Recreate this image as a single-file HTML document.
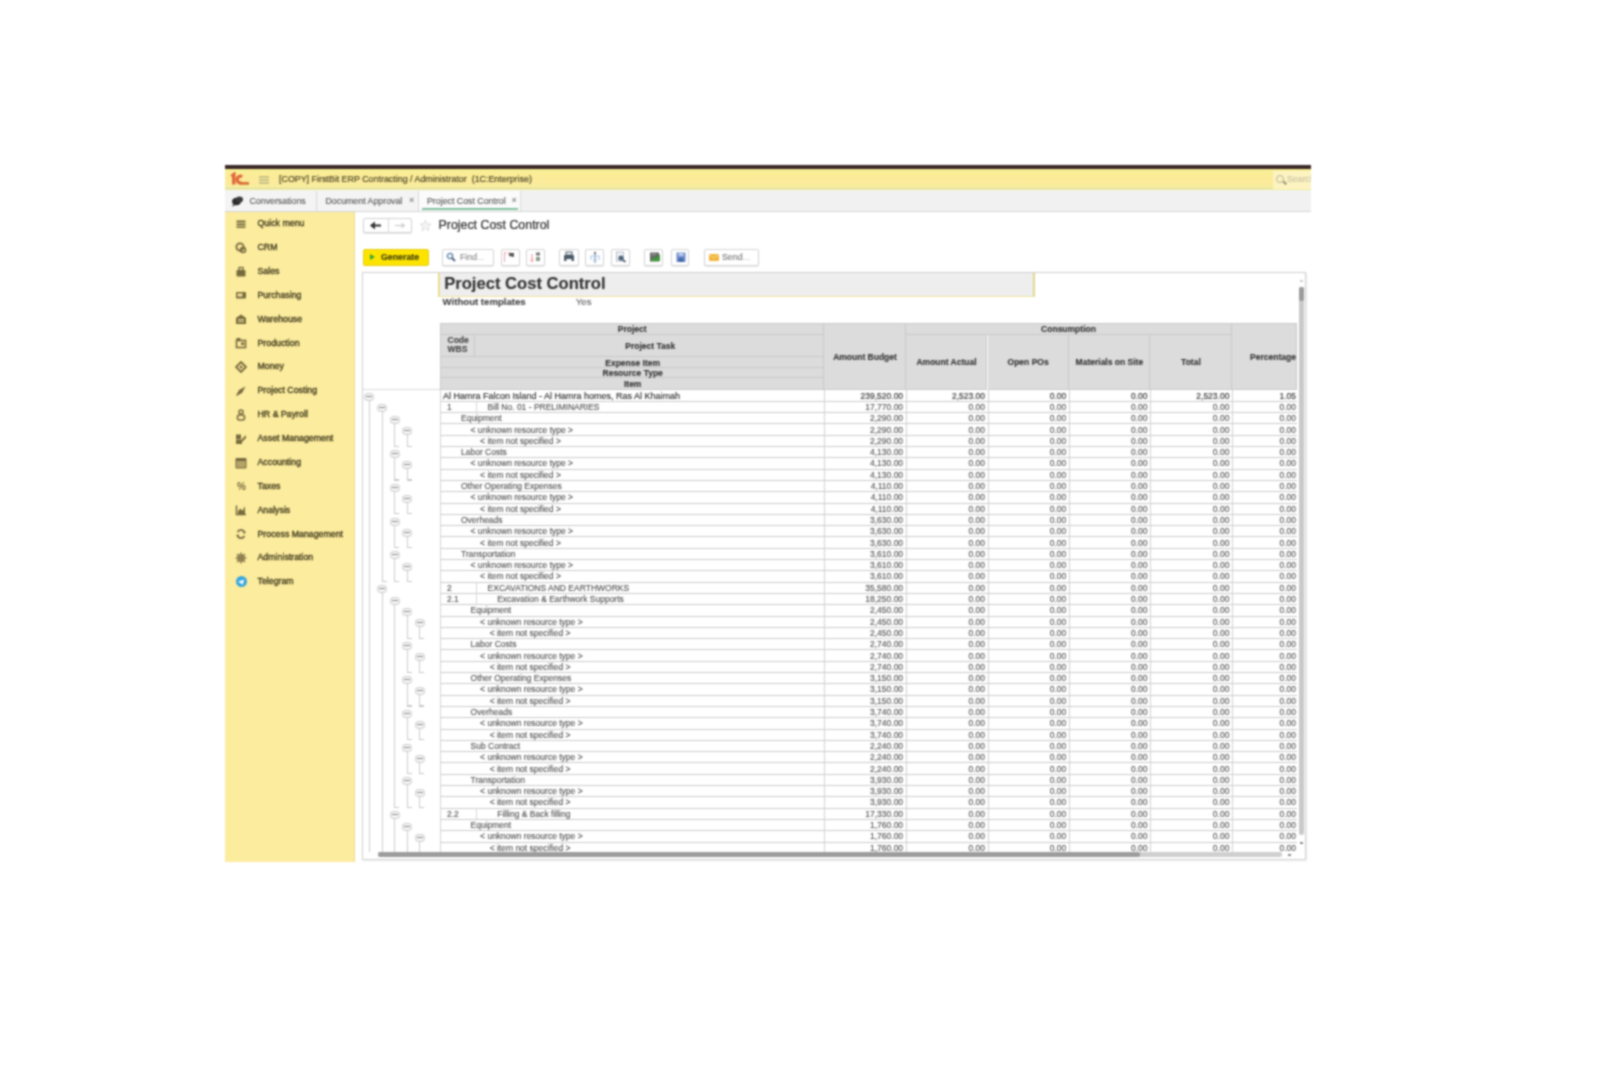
<!DOCTYPE html><html><head><meta charset="utf-8"><style>
*{margin:0;padding:0;box-sizing:border-box}
html,body{width:1600px;height:1068px;background:#fff;overflow:hidden;font-family:"Liberation Sans",sans-serif;}
.a{position:absolute}
.t{position:absolute;white-space:nowrap;line-height:1;-webkit-text-stroke:0.12px currentColor}
</style></head><body><svg width="0" height="0" style="position:absolute"><filter id="bl" x="0" y="0" width="1600" height="1068" filterUnits="userSpaceOnUse" color-interpolation-filters="sRGB"><feConvolveMatrix order="5" kernelMatrix="0.00142 0.00904 0.01675 0.00904 0.00142 0.00904 0.05757 0.10673 0.05757 0.00904 0.01675 0.10673 0.19786 0.10673 0.01675 0.00904 0.05757 0.10673 0.05757 0.00904 0.00142 0.00904 0.01675 0.00904 0.00142" edgeMode="duplicate"/></filter></svg><div id="w" style="position:absolute;left:0;top:0;width:1600px;height:1068px;background:#fff;filter:url(#bl);"><div class="a" style="left:225px;top:165px;width:1086px;height:4px;background:#3a2828"></div>
<div class="a" style="left:225px;top:169px;width:1086px;height:21px;background:linear-gradient(#f7f096 0px,#fbec96 6px,#fbea9c 15px,#f5ef9c 18px,#f4f09c 19px,#dcd8a8 19px,#dcd8a8 20px,#f4f09c 20px)"></div>
<svg class="a" style="left:229px;top:172px" width="22" height="15" viewBox="0 0 22 15"><path d="M2.5 4.5 L4.8 2.6 V12.5" stroke="#e0673a" stroke-width="3.4" fill="none"/><path d="M13.2 4.6 A3.4 3.4 0 1 0 13 10.6" stroke="#e0673a" stroke-width="3.2" fill="none"/><rect x="11" y="10" width="9" height="2.8" fill="#d8743a"/></svg>
<div class="a" style="left:259px;top:175.6px;width:10px;height:2.4px;background:#c9c186"></div>
<div class="a" style="left:259px;top:178.7px;width:10px;height:2.4px;background:#c9c186"></div>
<div class="a" style="left:259px;top:181.8px;width:10px;height:2.4px;background:#c9c186"></div>
<div class="t" style="left:279px;top:175px;font-size:8.9px;color:#4e4828;-webkit-text-stroke:0.2px #4e4828">[COPY] FirstBit ERP Contracting / Administrator&nbsp; (1C:Enterprise)</div>
<div class="a" style="left:1273px;top:171px;width:38px;height:18px;background:#fcf3c0;overflow:hidden"><div class="a" style="left:3px;top:4px;width:8px;height:8px;border:1.3px solid #b9b59a;border-radius:50%"></div><div class="a" style="left:9.5px;top:10.5px;width:4px;height:1.5px;background:#8f8a70;transform:rotate(45deg)"></div><div class="t" style="left:14px;top:4px;font-size:8.8px;color:#c9c4a4">Search</div></div>
<div class="a" style="left:225px;top:190px;width:1086px;height:22px;background:#f1f1f1;border-bottom:1px solid #d6d6d6"></div>
<div class="a" style="left:225px;top:191px;width:92px;height:20px;background:#f4f4f4;border-right:1px solid #dadada"></div>
<div class="a" style="left:318px;top:191px;width:101px;height:20px;background:#f4f4f4;border-right:1px solid #dadada"></div>
<div class="a" style="left:419px;top:191px;width:102px;height:20px;background:#fbfbfb;border-right:1px solid #dadada"></div>
<div class="a" style="left:422px;top:208px;width:96px;height:2px;background:#7fbfa0"></div>
<svg class="a" style="left:231px;top:195px" width="13" height="12" viewBox="0 0 13 12"><ellipse cx="5.5" cy="6.5" rx="4.5" ry="3.8" fill="#2a2a2a"/><ellipse cx="8.5" cy="4.5" rx="3.5" ry="3" fill="#3a3a3a"/><path d="M2 9.5 L1 11.5 L4.5 10" fill="#2a2a2a"/></svg>
<div class="t" style="left:249.5px;top:196.5px;font-size:8.8px;color:#555">Conversations</div>
<div class="t" style="left:325.5px;top:196.5px;font-size:8.8px;color:#555">Document Approval</div>
<div class="t" style="left:409px;top:195.5px;font-size:9px;color:#777">&#215;</div>
<div class="t" style="left:427px;top:196.5px;font-size:8.8px;color:#555">Project Cost Control</div>
<div class="t" style="left:511.5px;top:195.5px;font-size:9px;color:#777">&#215;</div>
<div class="a" style="left:225px;top:212px;width:130px;height:650px;background:#fcec9e;border-right:1px solid #eadb92"></div>
<div class="t" style="left:257.5px;top:219.15px;font-size:8.8px;color:#3a3418;-webkit-text-stroke:0.3px #3a3418">Quick menu</div>
<svg class="a" style="left:235px;top:217.75px" width="12" height="12" viewBox="0 0 12 12"><rect x="1.5" y="2.5" width="9" height="2" fill="#766a3c"/><rect x="1.5" y="5.5" width="9" height="2" fill="#766a3c"/><rect x="1.5" y="8.5" width="9" height="1.5" fill="#766a3c"/></svg>
<div class="t" style="left:257.5px;top:243.03px;font-size:8.8px;color:#3a3418;-webkit-text-stroke:0.3px #3a3418">CRM</div>
<svg class="a" style="left:235px;top:241.63px" width="12" height="12" viewBox="0 0 12 12"><circle cx="5" cy="5" r="3.6" fill="none" stroke="#766a3c" stroke-width="1.8"/><circle cx="8" cy="8" r="2.5" fill="none" stroke="#766a3c" stroke-width="1.6"/></svg>
<div class="t" style="left:257.5px;top:266.91px;font-size:8.8px;color:#3a3418;-webkit-text-stroke:0.3px #3a3418">Sales</div>
<svg class="a" style="left:235px;top:265.51px" width="12" height="12" viewBox="0 0 12 12"><rect x="1.5" y="4" width="9" height="6.5" rx="1" fill="#766a3c"/><rect x="4" y="1.5" width="4" height="3" fill="none" stroke="#766a3c" stroke-width="1.3"/></svg>
<div class="t" style="left:257.5px;top:290.79px;font-size:8.8px;color:#3a3418;-webkit-text-stroke:0.3px #3a3418">Purchasing</div>
<svg class="a" style="left:235px;top:289.39px" width="12" height="12" viewBox="0 0 12 12"><rect x="1" y="3" width="10" height="6.5" rx="1" fill="#766a3c"/><rect x="2.5" y="4.5" width="5" height="3" fill="#f5e39a"/></svg>
<div class="t" style="left:257.5px;top:314.67px;font-size:8.8px;color:#3a3418;-webkit-text-stroke:0.3px #3a3418">Warehouse</div>
<svg class="a" style="left:235px;top:313.27px" width="12" height="12" viewBox="0 0 12 12"><path d="M1 5 L6 1.5 L11 5 V11 H1 Z" fill="#766a3c"/><rect x="3" y="6" width="6" height="1" fill="#f5e39a"/><rect x="3" y="8" width="6" height="1" fill="#f5e39a"/></svg>
<div class="t" style="left:257.5px;top:338.55px;font-size:8.8px;color:#3a3418;-webkit-text-stroke:0.3px #3a3418">Production</div>
<svg class="a" style="left:235px;top:337.15px" width="12" height="12" viewBox="0 0 12 12"><rect x="1.5" y="3.5" width="9" height="7" fill="none" stroke="#766a3c" stroke-width="1.6"/><rect x="1.5" y="1" width="4" height="3" fill="#766a3c"/><rect x="6" y="5.5" width="3" height="2.5" fill="#766a3c"/></svg>
<div class="t" style="left:257.5px;top:362.43px;font-size:8.8px;color:#3a3418;-webkit-text-stroke:0.3px #3a3418">Money</div>
<svg class="a" style="left:235px;top:361.03px" width="12" height="12" viewBox="0 0 12 12"><path d="M6 1 L11 6 L6 11 L1 6 Z" fill="none" stroke="#766a3c" stroke-width="1.8"/><circle cx="6" cy="6" r="1.5" fill="#766a3c"/></svg>
<div class="t" style="left:257.5px;top:386.31px;font-size:8.8px;color:#3a3418;-webkit-text-stroke:0.3px #3a3418">Project Costing</div>
<svg class="a" style="left:235px;top:384.91px" width="12" height="12" viewBox="0 0 12 12"><path d="M10.5 1.5 L4 5 L2 9 L3 10 L7 8 Z" fill="#766a3c"/><path d="M1.5 10.5 L4 8" stroke="#766a3c" stroke-width="1.5"/></svg>
<div class="t" style="left:257.5px;top:410.19px;font-size:8.8px;color:#3a3418;-webkit-text-stroke:0.3px #3a3418">HR &amp; Payroll</div>
<svg class="a" style="left:235px;top:408.79px" width="12" height="12" viewBox="0 0 12 12"><circle cx="6" cy="3" r="2" fill="none" stroke="#766a3c" stroke-width="1.5"/><rect x="2.5" y="6" width="7" height="5" rx="2" fill="none" stroke="#766a3c" stroke-width="1.6"/></svg>
<div class="t" style="left:257.5px;top:434.07px;font-size:8.8px;color:#3a3418;-webkit-text-stroke:0.3px #3a3418">Asset Management</div>
<svg class="a" style="left:235px;top:432.67px" width="12" height="12" viewBox="0 0 12 12"><rect x="1" y="1.5" width="5" height="5" fill="#766a3c"/><path d="M1 11 V7 H6 L11 2 V5 L7 9 V11 Z" fill="#766a3c"/></svg>
<div class="t" style="left:257.5px;top:457.95px;font-size:8.8px;color:#3a3418;-webkit-text-stroke:0.3px #3a3418">Accounting</div>
<svg class="a" style="left:235px;top:456.55px" width="12" height="12" viewBox="0 0 12 12"><rect x="1" y="1.5" width="10" height="9.5" fill="#766a3c" opacity=".55"/><rect x="1" y="1.5" width="10" height="2.5" fill="#766a3c"/><path d="M1 1.5 H11 V11 H1 Z" fill="none" stroke="#766a3c" stroke-width="1"/></svg>
<div class="t" style="left:257.5px;top:481.83px;font-size:8.8px;color:#3a3418;-webkit-text-stroke:0.3px #3a3418">Taxes</div>
<svg class="a" style="left:235px;top:480.43px" width="12" height="12" viewBox="0 0 12 12"><text x="2" y="10" font-size="10" font-weight="bold" font-family="Liberation Sans" fill="#766a3c">%</text></svg>
<div class="t" style="left:257.5px;top:505.71px;font-size:8.8px;color:#3a3418;-webkit-text-stroke:0.3px #3a3418">Analysis</div>
<svg class="a" style="left:235px;top:504.31px" width="12" height="12" viewBox="0 0 12 12"><path d="M1.5 1.5 V10.5 H11" stroke="#766a3c" stroke-width="1.5" fill="none"/><path d="M3 10 L3 7 L5.5 4.5 L7.5 7 L10 2 V10 Z" fill="#766a3c"/></svg>
<div class="t" style="left:257.5px;top:529.59px;font-size:8.8px;color:#3a3418;-webkit-text-stroke:0.3px #3a3418">Process Management</div>
<svg class="a" style="left:235px;top:528.19px" width="12" height="12" viewBox="0 0 12 12"><path d="M2.5 4 A4 4 0 0 1 9.5 4" fill="none" stroke="#766a3c" stroke-width="1.7"/><path d="M9.5 8 A4 4 0 0 1 2.5 8" fill="none" stroke="#766a3c" stroke-width="1.7"/><path d="M8 2.5 L11 4.5 L8.5 6 Z M4 9.5 L1 7.5 L3.5 6 Z" fill="#766a3c"/></svg>
<div class="t" style="left:257.5px;top:553.47px;font-size:8.8px;color:#3a3418;-webkit-text-stroke:0.3px #3a3418">Administration</div>
<svg class="a" style="left:235px;top:552.07px" width="12" height="12" viewBox="0 0 12 12"><g opacity=".8"><circle cx="6" cy="6" r="4" fill="#766a3c"/><circle cx="6" cy="6" r="1.6" fill="#f5e39a"/><path d="M6 0.5 V11.5 M0.5 6 H11.5 M2 2 L10 10 M10 2 L2 10" stroke="#766a3c" stroke-width="1.6"/></g></svg>
<div class="t" style="left:257.5px;top:577.35px;font-size:8.8px;color:#3a3418;-webkit-text-stroke:0.3px #3a3418">Telegram</div>
<div class="a" style="left:235.5px;top:576.45px;width:11px;height:11px;border-radius:50%;background:#35a6df"></div>
<svg class="a" style="left:237px;top:577.95px" width="8" height="8" viewBox="0 0 8 8"><path d="M1 3.8 L7 1.5 L5.8 6.8 L3.8 5.2 Z" fill="#fff"/></svg>
<div class="a" style="left:355px;top:212px;width:956px;height:650px;background:#fff"></div>
<div class="a" style="left:363px;top:218px;width:49px;height:15px;border:1px solid #d2d2d2;border-radius:2px;background:#fff;box-shadow:0 1px 1px #e6e6e6"></div>
<div class="a" style="left:388px;top:219px;width:1px;height:13px;background:#d8d8d8"></div>
<svg class="a" style="left:369px;top:220px" width="14" height="11" viewBox="0 0 14 11"><path d="M2 5.5 H12" stroke="#333" stroke-width="2"/><path d="M1 5.5 L6 1.5 V9.5 Z" fill="#333"/></svg>
<svg class="a" style="left:393px;top:220px" width="14" height="11" viewBox="0 0 14 11"><path d="M2 5.5 H11" stroke="#d0d0d0" stroke-width="1.3"/><path d="M12.5 5.5 L8.5 2.5 V8.5 Z" fill="#d0d0d0"/></svg>
<svg class="a" style="left:419px;top:219px" width="13" height="13" viewBox="0 0 13 13"><path d="M6.5 1 L8.1 4.8 L12 5 L9 7.6 L10 11.8 L6.5 9.5 L3 11.8 L4 7.6 L1 5 L4.9 4.8 Z" fill="#f4f4f4" stroke="#e0e0e0" stroke-width="1"/></svg>
<div class="t" style="left:438.5px;top:219px;font-size:12.4px;color:#2a2a2a;-webkit-text-stroke:0.2px #2a2a2a">Project Cost Control</div>
<div class="a" style="left:362.5px;top:248.5px;width:66px;height:17px;background:#fde400;border:1px solid #e6cc10;border-radius:2px"></div>
<div class="a" style="left:370px;top:253.5px;width:0;height:0;border-left:5px solid #3aa535;border-top:3.5px solid transparent;border-bottom:3.5px solid transparent"></div>
<div class="t" style="left:381px;top:252.5px;font-size:8.8px;font-weight:bold;color:#3c3a10">Generate</div>
<div class="a" style="left:441.9px;top:248.5px;width:51.85px;height:17px;border:1px solid #d4d4d4;border-radius:2px;background:#fff;box-shadow:0 1px 1px #e8e8e8"></div>
<div class="a" style="left:500.6px;top:248.5px;width:19.40px;height:17px;border:1px solid #d4d4d4;border-radius:2px;background:#fff;box-shadow:0 1px 1px #e8e8e8"></div>
<div class="a" style="left:526.25px;top:248.5px;width:18.75px;height:17px;border:1px solid #d4d4d4;border-radius:2px;background:#fff;box-shadow:0 1px 1px #e8e8e8"></div>
<div class="a" style="left:559.4px;top:248.5px;width:19.35px;height:17px;border:1px solid #d4d4d4;border-radius:2px;background:#fff;box-shadow:0 1px 1px #e8e8e8"></div>
<div class="a" style="left:585px;top:248.5px;width:19.40px;height:17px;border:1px solid #d4d4d4;border-radius:2px;background:#fff;box-shadow:0 1px 1px #e8e8e8"></div>
<div class="a" style="left:611.25px;top:248.5px;width:18.75px;height:17px;border:1px solid #d4d4d4;border-radius:2px;background:#fff;box-shadow:0 1px 1px #e8e8e8"></div>
<div class="a" style="left:644.4px;top:248.5px;width:18.70px;height:17px;border:1px solid #d4d4d4;border-radius:2px;background:#fff;box-shadow:0 1px 1px #e8e8e8"></div>
<div class="a" style="left:670.6px;top:248.5px;width:18.80px;height:17px;border:1px solid #d4d4d4;border-radius:2px;background:#fff;box-shadow:0 1px 1px #e8e8e8"></div>
<div class="a" style="left:703.75px;top:248.5px;width:55.00px;height:17px;border:1px solid #d4d4d4;border-radius:2px;background:#fff;box-shadow:0 1px 1px #e8e8e8"></div>
<svg class="a" style="left:446px;top:251.5px" width="10" height="10" viewBox="0 0 10 10"><circle cx="4" cy="4" r="2.6" fill="none" stroke="#5d7fa6" stroke-width="1.4"/><path d="M6 6 L9 9" stroke="#4a5f7a" stroke-width="1.8"/></svg>
<div class="t" style="left:460px;top:252.5px;font-size:8.8px;color:#888">Find<span style="color:#bbb">...</span></div>
<svg class="a" style="left:503px;top:251px" width="14" height="12" viewBox="0 0 14 12"><path d="M1.5 1 V11" stroke="#f0a0b0" stroke-width="1"/><path d="M2 2 H9" stroke="#f3c0c8" stroke-width="1"/><path d="M6 2 L11 2 L11 6 L6 5 Z" fill="#555"/></svg>
<svg class="a" style="left:529px;top:251px" width="14" height="12" viewBox="0 0 14 12"><path d="M3 3 V11" stroke="#f0a0a8" stroke-width="1.2"/><path d="M1.5 8.5 L3 11 L4.5 8.5" fill="none" stroke="#f0a0a8" stroke-width="1"/><rect x="7" y="1.5" width="4" height="3" fill="#777"/><rect x="7" y="6" width="4" height="4" fill="#8a9a8a"/></svg>
<svg class="a" style="left:563px;top:251px" width="12" height="12" viewBox="0 0 12 12"><rect x="3" y="1" width="6" height="3" fill="none" stroke="#4b5a69" stroke-width="1"/><path d="M1 5 Q1 4 2 4 H10 Q11 4 11 5 V10 H1 Z" fill="#4b5a69"/><rect x="3.5" y="8" width="5" height="3" fill="#fff"/></svg>
<svg class="a" style="left:589px;top:250.5px" width="12" height="13" viewBox="0 0 12 13"><path d="M6 1 V12" stroke="#7a9cc0" stroke-width="1.2"/><path d="M1.5 5 H10.5 M2 5 V9 M10 5 V9 M4 9 H8" stroke="#a8c4e0" stroke-width="1"/><circle cx="6" cy="2" r="1" fill="#555"/></svg>
<svg class="a" style="left:615px;top:251px" width="12" height="12" viewBox="0 0 12 12"><rect x="1.5" y="1" width="7" height="9" fill="#f3f3f8" stroke="#a9b0c0" stroke-width="0.8"/><circle cx="6" cy="7" r="2.6" fill="#4d6278"/><path d="M8 9 L10.5 11" stroke="#2c3c4c" stroke-width="1.6"/></svg>
<svg class="a" style="left:648.5px;top:251px" width="12" height="12" viewBox="0 0 12 12"><rect x="1" y="1.5" width="9" height="9" fill="#666"/><path d="M2 9 L5 6 L7 7.5 L11 3 V10 H2 Z" fill="#3d9a3a"/><rect x="2" y="2.5" width="5" height="2" fill="#888"/></svg>
<svg class="a" style="left:674.5px;top:251px" width="12" height="12" viewBox="0 0 12 12"><rect x="1.5" y="1.5" width="9" height="9.5" fill="#6f8fcc"/><rect x="3.5" y="1.5" width="5" height="3.5" fill="#b8c8e8"/><rect x="3.5" y="7" width="5" height="4" fill="#4466aa"/></svg>
<svg class="a" style="left:707.5px;top:251.5px" width="12" height="11" viewBox="0 0 12 11"><rect x="1" y="2" width="10" height="7" rx="1" fill="#f2b53a"/><path d="M1 2.5 L6 6 L11 2.5" fill="none" stroke="#f8dc90" stroke-width="1"/></svg>
<div class="t" style="left:722px;top:252.5px;font-size:8.8px;color:#777">Send<span style="color:#bbb">...</span></div>
<div class="a" style="left:362px;top:272px;width:943.5px;height:588px;border:1px solid #d0d0d0;background:#fff;overflow:hidden;box-shadow:1px 1px 2px rgba(0,0,0,.08)" id="rb">
<div class="a" style="left:75.30px;top:-0.40px;width:597.20px;height:23.90px;background:#eeeeee;border-bottom:1.5px solid #f0e3a0;border-right:2px solid #e0d88e;border-left:2px solid #e8dc90"></div>
<div class="t" style="left:81.20px;top:2.50px;font-size:16.6px;font-weight:bold;color:#333">Project Cost Control</div>
<div class="t" style="left:79.60px;top:24.20px;font-size:9.6px;font-weight:bold;color:#444">Without templates</div>
<div class="t" style="left:212.80px;top:24.20px;font-size:9.6px;color:#666">Yes</div>
<div class="a" style="left:76.75px;top:50.40px;width:857.25px;height:1px;background:#c9c9c9;z-index:2"></div>
<div class="a" style="left:76.75px;top:50.40px;width:1px;height:66.40px;background:#c9c9c9;z-index:2"></div>
<div class="a" style="left:76.75px;top:50.40px;width:384.65px;height:11.60px;background:#dcdcdc;border-right:1px solid #c9c9c9;border-bottom:1px solid #c9c9c9;"></div>
<div class="t" style="left:169.20px;width:200px;text-align:center;top:52.40px;font-size:8.5px;font-weight:bold;color:#333">Project</div>
<div class="a" style="left:76.75px;top:62.00px;width:35.65px;height:21.90px;background:#dcdcdc;border-right:1px solid #c9c9c9;border-bottom:1px solid #c9c9c9;"></div>
<div class="t" style="left:84.50px;top:63.30px;font-size:8.5px;line-height:9px;color:#444;font-weight:bold">Code<br>WBS</div>
<div class="a" style="left:112.40px;top:62.00px;width:349.00px;height:21.90px;background:#dcdcdc;border-right:1px solid #c9c9c9;border-bottom:1px solid #c9c9c9;"></div>
<div class="t" style="left:187.20px;width:200px;text-align:center;top:69.15px;font-size:8.5px;font-weight:bold;color:#333">Project Task</div>
<div class="a" style="left:76.75px;top:83.90px;width:384.65px;height:11.00px;background:#dcdcdc;border-right:1px solid #c9c9c9;border-bottom:1px solid #c9c9c9;"></div>
<div class="t" style="left:169.70px;width:200px;text-align:center;top:85.60px;font-size:8.5px;font-weight:bold;color:#333">Expense Item</div>
<div class="a" style="left:76.75px;top:94.90px;width:384.65px;height:10.50px;background:#dcdcdc;border-right:1px solid #c9c9c9;border-bottom:1px solid #c9c9c9;"></div>
<div class="t" style="left:169.70px;width:200px;text-align:center;top:96.35px;font-size:8.5px;font-weight:bold;color:#333">Resource Type</div>
<div class="a" style="left:76.75px;top:105.40px;width:384.65px;height:11.40px;background:#dcdcdc;border-right:1px solid #c9c9c9;border-bottom:1px solid #c9c9c9;"></div>
<div class="t" style="left:169.70px;width:200px;text-align:center;top:107.30px;font-size:8.5px;font-weight:bold;color:#333">Item</div>
<div class="a" style="left:461.40px;top:50.40px;width:81.20px;height:66.40px;background:#dcdcdc;border-right:1px solid #c9c9c9;border-bottom:1px solid #c9c9c9;"></div>
<div class="t" style="left:402.00px;width:200px;text-align:center;top:79.70px;font-size:8.5px;font-weight:bold;color:#333">Amount Budget</div>
<div class="a" style="left:542.60px;top:50.40px;width:326.30px;height:11.60px;background:#dcdcdc;border-right:1px solid #c9c9c9;border-bottom:1px solid #c9c9c9;"></div>
<div class="t" style="left:605.50px;width:200px;text-align:center;top:51.80px;font-size:8.5px;font-weight:bold;color:#333">Consumption</div>
<div class="a" style="left:542.60px;top:62.00px;width:81.90px;height:54.80px;background:#dcdcdc;border-right:1px solid #c9c9c9;border-bottom:1px solid #c9c9c9;"></div>
<div class="t" style="left:483.55px;width:200px;text-align:center;top:85.00px;font-size:8.5px;font-weight:bold;color:#333">Amount Actual</div>
<div class="a" style="left:624.50px;top:62.00px;width:81.25px;height:54.80px;background:#dcdcdc;border-right:1px solid #c9c9c9;border-bottom:1px solid #c9c9c9;"></div>
<div class="t" style="left:565.12px;width:200px;text-align:center;top:85.00px;font-size:8.5px;font-weight:bold;color:#333">Open POs</div>
<div class="a" style="left:705.75px;top:62.00px;width:81.25px;height:54.80px;background:#dcdcdc;border-right:1px solid #c9c9c9;border-bottom:1px solid #c9c9c9;"></div>
<div class="t" style="left:646.38px;width:200px;text-align:center;top:85.00px;font-size:8.5px;font-weight:bold;color:#333">Materials on Site</div>
<div class="a" style="left:787.00px;top:62.00px;width:81.90px;height:54.80px;background:#dcdcdc;border-right:1px solid #c9c9c9;border-bottom:1px solid #c9c9c9;"></div>
<div class="t" style="left:727.95px;width:200px;text-align:center;top:85.00px;font-size:8.5px;font-weight:bold;color:#333">Total</div>
<div class="a" style="left:868.90px;top:50.40px;width:65.10px;height:66.40px;background:#dcdcdc;border-right:1px solid #c9c9c9;border-bottom:1px solid #c9c9c9;"></div>
<div class="t" style="left:810.00px;width:200px;text-align:center;top:79.70px;font-size:8.5px;font-weight:bold;color:#333">Percentage</div>
<div class="a" style="left:0px;top:116.30px;width:76.75px;height:1px;background:#dadada"></div>
<div class="a" style="left:0;top:0;width:934.00px;height:579.00px;overflow:hidden">
<div class="a" style="left:76.75px;top:127.80px;width:857.25px;height:1px;background:#cbcbcb"></div>
<div class="t" style="left:79.90px;top:118.60px;font-size:9px;color:#262626">Al Hamra Falcon Island - Al Hamra homes, Ras Al Khaimah</div>
<div class="t" style="left:460.10px;width:80px;text-align:right;top:118.60px;font-size:8.5px;font-weight:normal;color:#2a2a2a">239,520.00</div>
<div class="t" style="left:542.00px;width:80px;text-align:right;top:118.60px;font-size:8.5px;font-weight:normal;color:#2a2a2a">2,523.00</div>
<div class="t" style="left:623.25px;width:80px;text-align:right;top:118.60px;font-size:8.5px;font-weight:normal;color:#2a2a2a">0.00</div>
<div class="t" style="left:704.50px;width:80px;text-align:right;top:118.60px;font-size:8.5px;font-weight:normal;color:#2a2a2a">0.00</div>
<div class="t" style="left:786.40px;width:80px;text-align:right;top:118.60px;font-size:8.5px;font-weight:normal;color:#2a2a2a">2,523.00</div>
<div class="t" style="left:853.00px;width:80px;text-align:right;top:118.60px;font-size:8.5px;font-weight:normal;color:#2a2a2a">1.05</div>
<div class="a" style="left:76.75px;top:139.10px;width:857.25px;height:1px;background:#cbcbcb"></div>
<div class="t" style="left:84.00px;top:129.90px;font-size:8.5px;color:#505050">1</div>
<div class="a" style="left:112.50px;top:128.30px;width:1px;height:11.30px;background:#d8d8d8"></div>
<div class="t" style="left:124.60px;top:129.90px;font-size:8.5px;color:#505050">Bill No. 01 - PRELIMINARIES</div>
<div class="t" style="left:460.10px;width:80px;text-align:right;top:129.90px;font-size:8.5px;font-weight:normal;color:#505050">17,770.00</div>
<div class="t" style="left:542.00px;width:80px;text-align:right;top:129.90px;font-size:8.5px;font-weight:normal;color:#505050">0.00</div>
<div class="t" style="left:623.25px;width:80px;text-align:right;top:129.90px;font-size:8.5px;font-weight:normal;color:#505050">0.00</div>
<div class="t" style="left:704.50px;width:80px;text-align:right;top:129.90px;font-size:8.5px;font-weight:normal;color:#505050">0.00</div>
<div class="t" style="left:786.40px;width:80px;text-align:right;top:129.90px;font-size:8.5px;font-weight:normal;color:#505050">0.00</div>
<div class="t" style="left:853.00px;width:80px;text-align:right;top:129.90px;font-size:8.5px;font-weight:normal;color:#505050">0.00</div>
<div class="a" style="left:76.75px;top:150.40px;width:857.25px;height:1px;background:#cbcbcb"></div>
<div class="t" style="left:98.00px;top:141.20px;font-size:8.5px;color:#505050">Equipment</div>
<div class="t" style="left:460.10px;width:80px;text-align:right;top:141.20px;font-size:8.5px;font-weight:normal;color:#505050">2,290.00</div>
<div class="t" style="left:542.00px;width:80px;text-align:right;top:141.20px;font-size:8.5px;font-weight:normal;color:#505050">0.00</div>
<div class="t" style="left:623.25px;width:80px;text-align:right;top:141.20px;font-size:8.5px;font-weight:normal;color:#505050">0.00</div>
<div class="t" style="left:704.50px;width:80px;text-align:right;top:141.20px;font-size:8.5px;font-weight:normal;color:#505050">0.00</div>
<div class="t" style="left:786.40px;width:80px;text-align:right;top:141.20px;font-size:8.5px;font-weight:normal;color:#505050">0.00</div>
<div class="t" style="left:853.00px;width:80px;text-align:right;top:141.20px;font-size:8.5px;font-weight:normal;color:#505050">0.00</div>
<div class="a" style="left:76.75px;top:161.70px;width:857.25px;height:1px;background:#cbcbcb"></div>
<div class="t" style="left:107.55px;top:152.50px;font-size:8.5px;color:#505050">&lt; unknown resource type &gt;</div>
<div class="t" style="left:460.10px;width:80px;text-align:right;top:152.50px;font-size:8.5px;font-weight:normal;color:#505050">2,290.00</div>
<div class="t" style="left:542.00px;width:80px;text-align:right;top:152.50px;font-size:8.5px;font-weight:normal;color:#505050">0.00</div>
<div class="t" style="left:623.25px;width:80px;text-align:right;top:152.50px;font-size:8.5px;font-weight:normal;color:#505050">0.00</div>
<div class="t" style="left:704.50px;width:80px;text-align:right;top:152.50px;font-size:8.5px;font-weight:normal;color:#505050">0.00</div>
<div class="t" style="left:786.40px;width:80px;text-align:right;top:152.50px;font-size:8.5px;font-weight:normal;color:#505050">0.00</div>
<div class="t" style="left:853.00px;width:80px;text-align:right;top:152.50px;font-size:8.5px;font-weight:normal;color:#505050">0.00</div>
<div class="a" style="left:76.75px;top:173.00px;width:857.25px;height:1px;background:#cbcbcb"></div>
<div class="t" style="left:117.10px;top:163.80px;font-size:8.5px;color:#505050">&lt; item not specified &gt;</div>
<div class="t" style="left:460.10px;width:80px;text-align:right;top:163.80px;font-size:8.5px;font-weight:normal;color:#505050">2,290.00</div>
<div class="t" style="left:542.00px;width:80px;text-align:right;top:163.80px;font-size:8.5px;font-weight:normal;color:#505050">0.00</div>
<div class="t" style="left:623.25px;width:80px;text-align:right;top:163.80px;font-size:8.5px;font-weight:normal;color:#505050">0.00</div>
<div class="t" style="left:704.50px;width:80px;text-align:right;top:163.80px;font-size:8.5px;font-weight:normal;color:#505050">0.00</div>
<div class="t" style="left:786.40px;width:80px;text-align:right;top:163.80px;font-size:8.5px;font-weight:normal;color:#505050">0.00</div>
<div class="t" style="left:853.00px;width:80px;text-align:right;top:163.80px;font-size:8.5px;font-weight:normal;color:#505050">0.00</div>
<div class="a" style="left:76.75px;top:184.30px;width:857.25px;height:1px;background:#cbcbcb"></div>
<div class="t" style="left:98.00px;top:175.10px;font-size:8.5px;color:#505050">Labor Costs</div>
<div class="t" style="left:460.10px;width:80px;text-align:right;top:175.10px;font-size:8.5px;font-weight:normal;color:#505050">4,130.00</div>
<div class="t" style="left:542.00px;width:80px;text-align:right;top:175.10px;font-size:8.5px;font-weight:normal;color:#505050">0.00</div>
<div class="t" style="left:623.25px;width:80px;text-align:right;top:175.10px;font-size:8.5px;font-weight:normal;color:#505050">0.00</div>
<div class="t" style="left:704.50px;width:80px;text-align:right;top:175.10px;font-size:8.5px;font-weight:normal;color:#505050">0.00</div>
<div class="t" style="left:786.40px;width:80px;text-align:right;top:175.10px;font-size:8.5px;font-weight:normal;color:#505050">0.00</div>
<div class="t" style="left:853.00px;width:80px;text-align:right;top:175.10px;font-size:8.5px;font-weight:normal;color:#505050">0.00</div>
<div class="a" style="left:76.75px;top:195.60px;width:857.25px;height:1px;background:#cbcbcb"></div>
<div class="t" style="left:107.55px;top:186.40px;font-size:8.5px;color:#505050">&lt; unknown resource type &gt;</div>
<div class="t" style="left:460.10px;width:80px;text-align:right;top:186.40px;font-size:8.5px;font-weight:normal;color:#505050">4,130.00</div>
<div class="t" style="left:542.00px;width:80px;text-align:right;top:186.40px;font-size:8.5px;font-weight:normal;color:#505050">0.00</div>
<div class="t" style="left:623.25px;width:80px;text-align:right;top:186.40px;font-size:8.5px;font-weight:normal;color:#505050">0.00</div>
<div class="t" style="left:704.50px;width:80px;text-align:right;top:186.40px;font-size:8.5px;font-weight:normal;color:#505050">0.00</div>
<div class="t" style="left:786.40px;width:80px;text-align:right;top:186.40px;font-size:8.5px;font-weight:normal;color:#505050">0.00</div>
<div class="t" style="left:853.00px;width:80px;text-align:right;top:186.40px;font-size:8.5px;font-weight:normal;color:#505050">0.00</div>
<div class="a" style="left:76.75px;top:206.90px;width:857.25px;height:1px;background:#cbcbcb"></div>
<div class="t" style="left:117.10px;top:197.70px;font-size:8.5px;color:#505050">&lt; item not specified &gt;</div>
<div class="t" style="left:460.10px;width:80px;text-align:right;top:197.70px;font-size:8.5px;font-weight:normal;color:#505050">4,130.00</div>
<div class="t" style="left:542.00px;width:80px;text-align:right;top:197.70px;font-size:8.5px;font-weight:normal;color:#505050">0.00</div>
<div class="t" style="left:623.25px;width:80px;text-align:right;top:197.70px;font-size:8.5px;font-weight:normal;color:#505050">0.00</div>
<div class="t" style="left:704.50px;width:80px;text-align:right;top:197.70px;font-size:8.5px;font-weight:normal;color:#505050">0.00</div>
<div class="t" style="left:786.40px;width:80px;text-align:right;top:197.70px;font-size:8.5px;font-weight:normal;color:#505050">0.00</div>
<div class="t" style="left:853.00px;width:80px;text-align:right;top:197.70px;font-size:8.5px;font-weight:normal;color:#505050">0.00</div>
<div class="a" style="left:76.75px;top:218.20px;width:857.25px;height:1px;background:#cbcbcb"></div>
<div class="t" style="left:98.00px;top:209.00px;font-size:8.5px;color:#505050">Other Operating Expenses</div>
<div class="t" style="left:460.10px;width:80px;text-align:right;top:209.00px;font-size:8.5px;font-weight:normal;color:#505050">4,110.00</div>
<div class="t" style="left:542.00px;width:80px;text-align:right;top:209.00px;font-size:8.5px;font-weight:normal;color:#505050">0.00</div>
<div class="t" style="left:623.25px;width:80px;text-align:right;top:209.00px;font-size:8.5px;font-weight:normal;color:#505050">0.00</div>
<div class="t" style="left:704.50px;width:80px;text-align:right;top:209.00px;font-size:8.5px;font-weight:normal;color:#505050">0.00</div>
<div class="t" style="left:786.40px;width:80px;text-align:right;top:209.00px;font-size:8.5px;font-weight:normal;color:#505050">0.00</div>
<div class="t" style="left:853.00px;width:80px;text-align:right;top:209.00px;font-size:8.5px;font-weight:normal;color:#505050">0.00</div>
<div class="a" style="left:76.75px;top:229.50px;width:857.25px;height:1px;background:#cbcbcb"></div>
<div class="t" style="left:107.55px;top:220.30px;font-size:8.5px;color:#505050">&lt; unknown resource type &gt;</div>
<div class="t" style="left:460.10px;width:80px;text-align:right;top:220.30px;font-size:8.5px;font-weight:normal;color:#505050">4,110.00</div>
<div class="t" style="left:542.00px;width:80px;text-align:right;top:220.30px;font-size:8.5px;font-weight:normal;color:#505050">0.00</div>
<div class="t" style="left:623.25px;width:80px;text-align:right;top:220.30px;font-size:8.5px;font-weight:normal;color:#505050">0.00</div>
<div class="t" style="left:704.50px;width:80px;text-align:right;top:220.30px;font-size:8.5px;font-weight:normal;color:#505050">0.00</div>
<div class="t" style="left:786.40px;width:80px;text-align:right;top:220.30px;font-size:8.5px;font-weight:normal;color:#505050">0.00</div>
<div class="t" style="left:853.00px;width:80px;text-align:right;top:220.30px;font-size:8.5px;font-weight:normal;color:#505050">0.00</div>
<div class="a" style="left:76.75px;top:240.80px;width:857.25px;height:1px;background:#cbcbcb"></div>
<div class="t" style="left:117.10px;top:231.60px;font-size:8.5px;color:#505050">&lt; item not specified &gt;</div>
<div class="t" style="left:460.10px;width:80px;text-align:right;top:231.60px;font-size:8.5px;font-weight:normal;color:#505050">4,110.00</div>
<div class="t" style="left:542.00px;width:80px;text-align:right;top:231.60px;font-size:8.5px;font-weight:normal;color:#505050">0.00</div>
<div class="t" style="left:623.25px;width:80px;text-align:right;top:231.60px;font-size:8.5px;font-weight:normal;color:#505050">0.00</div>
<div class="t" style="left:704.50px;width:80px;text-align:right;top:231.60px;font-size:8.5px;font-weight:normal;color:#505050">0.00</div>
<div class="t" style="left:786.40px;width:80px;text-align:right;top:231.60px;font-size:8.5px;font-weight:normal;color:#505050">0.00</div>
<div class="t" style="left:853.00px;width:80px;text-align:right;top:231.60px;font-size:8.5px;font-weight:normal;color:#505050">0.00</div>
<div class="a" style="left:76.75px;top:252.10px;width:857.25px;height:1px;background:#cbcbcb"></div>
<div class="t" style="left:98.00px;top:242.90px;font-size:8.5px;color:#505050">Overheads</div>
<div class="t" style="left:460.10px;width:80px;text-align:right;top:242.90px;font-size:8.5px;font-weight:normal;color:#505050">3,630.00</div>
<div class="t" style="left:542.00px;width:80px;text-align:right;top:242.90px;font-size:8.5px;font-weight:normal;color:#505050">0.00</div>
<div class="t" style="left:623.25px;width:80px;text-align:right;top:242.90px;font-size:8.5px;font-weight:normal;color:#505050">0.00</div>
<div class="t" style="left:704.50px;width:80px;text-align:right;top:242.90px;font-size:8.5px;font-weight:normal;color:#505050">0.00</div>
<div class="t" style="left:786.40px;width:80px;text-align:right;top:242.90px;font-size:8.5px;font-weight:normal;color:#505050">0.00</div>
<div class="t" style="left:853.00px;width:80px;text-align:right;top:242.90px;font-size:8.5px;font-weight:normal;color:#505050">0.00</div>
<div class="a" style="left:76.75px;top:263.40px;width:857.25px;height:1px;background:#cbcbcb"></div>
<div class="t" style="left:107.55px;top:254.20px;font-size:8.5px;color:#505050">&lt; unknown resource type &gt;</div>
<div class="t" style="left:460.10px;width:80px;text-align:right;top:254.20px;font-size:8.5px;font-weight:normal;color:#505050">3,630.00</div>
<div class="t" style="left:542.00px;width:80px;text-align:right;top:254.20px;font-size:8.5px;font-weight:normal;color:#505050">0.00</div>
<div class="t" style="left:623.25px;width:80px;text-align:right;top:254.20px;font-size:8.5px;font-weight:normal;color:#505050">0.00</div>
<div class="t" style="left:704.50px;width:80px;text-align:right;top:254.20px;font-size:8.5px;font-weight:normal;color:#505050">0.00</div>
<div class="t" style="left:786.40px;width:80px;text-align:right;top:254.20px;font-size:8.5px;font-weight:normal;color:#505050">0.00</div>
<div class="t" style="left:853.00px;width:80px;text-align:right;top:254.20px;font-size:8.5px;font-weight:normal;color:#505050">0.00</div>
<div class="a" style="left:76.75px;top:274.70px;width:857.25px;height:1px;background:#cbcbcb"></div>
<div class="t" style="left:117.10px;top:265.50px;font-size:8.5px;color:#505050">&lt; item not specified &gt;</div>
<div class="t" style="left:460.10px;width:80px;text-align:right;top:265.50px;font-size:8.5px;font-weight:normal;color:#505050">3,630.00</div>
<div class="t" style="left:542.00px;width:80px;text-align:right;top:265.50px;font-size:8.5px;font-weight:normal;color:#505050">0.00</div>
<div class="t" style="left:623.25px;width:80px;text-align:right;top:265.50px;font-size:8.5px;font-weight:normal;color:#505050">0.00</div>
<div class="t" style="left:704.50px;width:80px;text-align:right;top:265.50px;font-size:8.5px;font-weight:normal;color:#505050">0.00</div>
<div class="t" style="left:786.40px;width:80px;text-align:right;top:265.50px;font-size:8.5px;font-weight:normal;color:#505050">0.00</div>
<div class="t" style="left:853.00px;width:80px;text-align:right;top:265.50px;font-size:8.5px;font-weight:normal;color:#505050">0.00</div>
<div class="a" style="left:76.75px;top:286.00px;width:857.25px;height:1px;background:#cbcbcb"></div>
<div class="t" style="left:98.00px;top:276.80px;font-size:8.5px;color:#505050">Transportation</div>
<div class="t" style="left:460.10px;width:80px;text-align:right;top:276.80px;font-size:8.5px;font-weight:normal;color:#505050">3,610.00</div>
<div class="t" style="left:542.00px;width:80px;text-align:right;top:276.80px;font-size:8.5px;font-weight:normal;color:#505050">0.00</div>
<div class="t" style="left:623.25px;width:80px;text-align:right;top:276.80px;font-size:8.5px;font-weight:normal;color:#505050">0.00</div>
<div class="t" style="left:704.50px;width:80px;text-align:right;top:276.80px;font-size:8.5px;font-weight:normal;color:#505050">0.00</div>
<div class="t" style="left:786.40px;width:80px;text-align:right;top:276.80px;font-size:8.5px;font-weight:normal;color:#505050">0.00</div>
<div class="t" style="left:853.00px;width:80px;text-align:right;top:276.80px;font-size:8.5px;font-weight:normal;color:#505050">0.00</div>
<div class="a" style="left:76.75px;top:297.30px;width:857.25px;height:1px;background:#cbcbcb"></div>
<div class="t" style="left:107.55px;top:288.10px;font-size:8.5px;color:#505050">&lt; unknown resource type &gt;</div>
<div class="t" style="left:460.10px;width:80px;text-align:right;top:288.10px;font-size:8.5px;font-weight:normal;color:#505050">3,610.00</div>
<div class="t" style="left:542.00px;width:80px;text-align:right;top:288.10px;font-size:8.5px;font-weight:normal;color:#505050">0.00</div>
<div class="t" style="left:623.25px;width:80px;text-align:right;top:288.10px;font-size:8.5px;font-weight:normal;color:#505050">0.00</div>
<div class="t" style="left:704.50px;width:80px;text-align:right;top:288.10px;font-size:8.5px;font-weight:normal;color:#505050">0.00</div>
<div class="t" style="left:786.40px;width:80px;text-align:right;top:288.10px;font-size:8.5px;font-weight:normal;color:#505050">0.00</div>
<div class="t" style="left:853.00px;width:80px;text-align:right;top:288.10px;font-size:8.5px;font-weight:normal;color:#505050">0.00</div>
<div class="a" style="left:76.75px;top:308.60px;width:857.25px;height:1px;background:#cbcbcb"></div>
<div class="t" style="left:117.10px;top:299.40px;font-size:8.5px;color:#505050">&lt; item not specified &gt;</div>
<div class="t" style="left:460.10px;width:80px;text-align:right;top:299.40px;font-size:8.5px;font-weight:normal;color:#505050">3,610.00</div>
<div class="t" style="left:542.00px;width:80px;text-align:right;top:299.40px;font-size:8.5px;font-weight:normal;color:#505050">0.00</div>
<div class="t" style="left:623.25px;width:80px;text-align:right;top:299.40px;font-size:8.5px;font-weight:normal;color:#505050">0.00</div>
<div class="t" style="left:704.50px;width:80px;text-align:right;top:299.40px;font-size:8.5px;font-weight:normal;color:#505050">0.00</div>
<div class="t" style="left:786.40px;width:80px;text-align:right;top:299.40px;font-size:8.5px;font-weight:normal;color:#505050">0.00</div>
<div class="t" style="left:853.00px;width:80px;text-align:right;top:299.40px;font-size:8.5px;font-weight:normal;color:#505050">0.00</div>
<div class="a" style="left:76.75px;top:319.90px;width:857.25px;height:1px;background:#cbcbcb"></div>
<div class="t" style="left:84.00px;top:310.70px;font-size:8.5px;color:#505050">2</div>
<div class="a" style="left:112.50px;top:309.10px;width:1px;height:11.30px;background:#d8d8d8"></div>
<div class="t" style="left:124.60px;top:310.70px;font-size:8.5px;color:#505050">EXCAVATIONS AND EARTHWORKS</div>
<div class="t" style="left:460.10px;width:80px;text-align:right;top:310.70px;font-size:8.5px;font-weight:normal;color:#505050">35,580.00</div>
<div class="t" style="left:542.00px;width:80px;text-align:right;top:310.70px;font-size:8.5px;font-weight:normal;color:#505050">0.00</div>
<div class="t" style="left:623.25px;width:80px;text-align:right;top:310.70px;font-size:8.5px;font-weight:normal;color:#505050">0.00</div>
<div class="t" style="left:704.50px;width:80px;text-align:right;top:310.70px;font-size:8.5px;font-weight:normal;color:#505050">0.00</div>
<div class="t" style="left:786.40px;width:80px;text-align:right;top:310.70px;font-size:8.5px;font-weight:normal;color:#505050">0.00</div>
<div class="t" style="left:853.00px;width:80px;text-align:right;top:310.70px;font-size:8.5px;font-weight:normal;color:#505050">0.00</div>
<div class="a" style="left:76.75px;top:331.20px;width:857.25px;height:1px;background:#cbcbcb"></div>
<div class="t" style="left:84.00px;top:322.00px;font-size:8.5px;color:#505050">2.1</div>
<div class="a" style="left:112.50px;top:320.40px;width:1px;height:11.30px;background:#d8d8d8"></div>
<div class="t" style="left:134.20px;top:322.00px;font-size:8.5px;color:#505050">Excavation &amp; Earthwork Supports</div>
<div class="t" style="left:460.10px;width:80px;text-align:right;top:322.00px;font-size:8.5px;font-weight:normal;color:#505050">18,250.00</div>
<div class="t" style="left:542.00px;width:80px;text-align:right;top:322.00px;font-size:8.5px;font-weight:normal;color:#505050">0.00</div>
<div class="t" style="left:623.25px;width:80px;text-align:right;top:322.00px;font-size:8.5px;font-weight:normal;color:#505050">0.00</div>
<div class="t" style="left:704.50px;width:80px;text-align:right;top:322.00px;font-size:8.5px;font-weight:normal;color:#505050">0.00</div>
<div class="t" style="left:786.40px;width:80px;text-align:right;top:322.00px;font-size:8.5px;font-weight:normal;color:#505050">0.00</div>
<div class="t" style="left:853.00px;width:80px;text-align:right;top:322.00px;font-size:8.5px;font-weight:normal;color:#505050">0.00</div>
<div class="a" style="left:76.75px;top:342.50px;width:857.25px;height:1px;background:#cbcbcb"></div>
<div class="t" style="left:107.55px;top:333.30px;font-size:8.5px;color:#505050">Equipment</div>
<div class="t" style="left:460.10px;width:80px;text-align:right;top:333.30px;font-size:8.5px;font-weight:normal;color:#505050">2,450.00</div>
<div class="t" style="left:542.00px;width:80px;text-align:right;top:333.30px;font-size:8.5px;font-weight:normal;color:#505050">0.00</div>
<div class="t" style="left:623.25px;width:80px;text-align:right;top:333.30px;font-size:8.5px;font-weight:normal;color:#505050">0.00</div>
<div class="t" style="left:704.50px;width:80px;text-align:right;top:333.30px;font-size:8.5px;font-weight:normal;color:#505050">0.00</div>
<div class="t" style="left:786.40px;width:80px;text-align:right;top:333.30px;font-size:8.5px;font-weight:normal;color:#505050">0.00</div>
<div class="t" style="left:853.00px;width:80px;text-align:right;top:333.30px;font-size:8.5px;font-weight:normal;color:#505050">0.00</div>
<div class="a" style="left:76.75px;top:353.80px;width:857.25px;height:1px;background:#cbcbcb"></div>
<div class="t" style="left:117.10px;top:344.60px;font-size:8.5px;color:#505050">&lt; unknown resource type &gt;</div>
<div class="t" style="left:460.10px;width:80px;text-align:right;top:344.60px;font-size:8.5px;font-weight:normal;color:#505050">2,450.00</div>
<div class="t" style="left:542.00px;width:80px;text-align:right;top:344.60px;font-size:8.5px;font-weight:normal;color:#505050">0.00</div>
<div class="t" style="left:623.25px;width:80px;text-align:right;top:344.60px;font-size:8.5px;font-weight:normal;color:#505050">0.00</div>
<div class="t" style="left:704.50px;width:80px;text-align:right;top:344.60px;font-size:8.5px;font-weight:normal;color:#505050">0.00</div>
<div class="t" style="left:786.40px;width:80px;text-align:right;top:344.60px;font-size:8.5px;font-weight:normal;color:#505050">0.00</div>
<div class="t" style="left:853.00px;width:80px;text-align:right;top:344.60px;font-size:8.5px;font-weight:normal;color:#505050">0.00</div>
<div class="a" style="left:76.75px;top:365.10px;width:857.25px;height:1px;background:#cbcbcb"></div>
<div class="t" style="left:126.65px;top:355.90px;font-size:8.5px;color:#505050">&lt; item not specified &gt;</div>
<div class="t" style="left:460.10px;width:80px;text-align:right;top:355.90px;font-size:8.5px;font-weight:normal;color:#505050">2,450.00</div>
<div class="t" style="left:542.00px;width:80px;text-align:right;top:355.90px;font-size:8.5px;font-weight:normal;color:#505050">0.00</div>
<div class="t" style="left:623.25px;width:80px;text-align:right;top:355.90px;font-size:8.5px;font-weight:normal;color:#505050">0.00</div>
<div class="t" style="left:704.50px;width:80px;text-align:right;top:355.90px;font-size:8.5px;font-weight:normal;color:#505050">0.00</div>
<div class="t" style="left:786.40px;width:80px;text-align:right;top:355.90px;font-size:8.5px;font-weight:normal;color:#505050">0.00</div>
<div class="t" style="left:853.00px;width:80px;text-align:right;top:355.90px;font-size:8.5px;font-weight:normal;color:#505050">0.00</div>
<div class="a" style="left:76.75px;top:376.40px;width:857.25px;height:1px;background:#cbcbcb"></div>
<div class="t" style="left:107.55px;top:367.20px;font-size:8.5px;color:#505050">Labor Costs</div>
<div class="t" style="left:460.10px;width:80px;text-align:right;top:367.20px;font-size:8.5px;font-weight:normal;color:#505050">2,740.00</div>
<div class="t" style="left:542.00px;width:80px;text-align:right;top:367.20px;font-size:8.5px;font-weight:normal;color:#505050">0.00</div>
<div class="t" style="left:623.25px;width:80px;text-align:right;top:367.20px;font-size:8.5px;font-weight:normal;color:#505050">0.00</div>
<div class="t" style="left:704.50px;width:80px;text-align:right;top:367.20px;font-size:8.5px;font-weight:normal;color:#505050">0.00</div>
<div class="t" style="left:786.40px;width:80px;text-align:right;top:367.20px;font-size:8.5px;font-weight:normal;color:#505050">0.00</div>
<div class="t" style="left:853.00px;width:80px;text-align:right;top:367.20px;font-size:8.5px;font-weight:normal;color:#505050">0.00</div>
<div class="a" style="left:76.75px;top:387.70px;width:857.25px;height:1px;background:#cbcbcb"></div>
<div class="t" style="left:117.10px;top:378.50px;font-size:8.5px;color:#505050">&lt; unknown resource type &gt;</div>
<div class="t" style="left:460.10px;width:80px;text-align:right;top:378.50px;font-size:8.5px;font-weight:normal;color:#505050">2,740.00</div>
<div class="t" style="left:542.00px;width:80px;text-align:right;top:378.50px;font-size:8.5px;font-weight:normal;color:#505050">0.00</div>
<div class="t" style="left:623.25px;width:80px;text-align:right;top:378.50px;font-size:8.5px;font-weight:normal;color:#505050">0.00</div>
<div class="t" style="left:704.50px;width:80px;text-align:right;top:378.50px;font-size:8.5px;font-weight:normal;color:#505050">0.00</div>
<div class="t" style="left:786.40px;width:80px;text-align:right;top:378.50px;font-size:8.5px;font-weight:normal;color:#505050">0.00</div>
<div class="t" style="left:853.00px;width:80px;text-align:right;top:378.50px;font-size:8.5px;font-weight:normal;color:#505050">0.00</div>
<div class="a" style="left:76.75px;top:399.00px;width:857.25px;height:1px;background:#cbcbcb"></div>
<div class="t" style="left:126.65px;top:389.80px;font-size:8.5px;color:#505050">&lt; item not specified &gt;</div>
<div class="t" style="left:460.10px;width:80px;text-align:right;top:389.80px;font-size:8.5px;font-weight:normal;color:#505050">2,740.00</div>
<div class="t" style="left:542.00px;width:80px;text-align:right;top:389.80px;font-size:8.5px;font-weight:normal;color:#505050">0.00</div>
<div class="t" style="left:623.25px;width:80px;text-align:right;top:389.80px;font-size:8.5px;font-weight:normal;color:#505050">0.00</div>
<div class="t" style="left:704.50px;width:80px;text-align:right;top:389.80px;font-size:8.5px;font-weight:normal;color:#505050">0.00</div>
<div class="t" style="left:786.40px;width:80px;text-align:right;top:389.80px;font-size:8.5px;font-weight:normal;color:#505050">0.00</div>
<div class="t" style="left:853.00px;width:80px;text-align:right;top:389.80px;font-size:8.5px;font-weight:normal;color:#505050">0.00</div>
<div class="a" style="left:76.75px;top:410.30px;width:857.25px;height:1px;background:#cbcbcb"></div>
<div class="t" style="left:107.55px;top:401.10px;font-size:8.5px;color:#505050">Other Operating Expenses</div>
<div class="t" style="left:460.10px;width:80px;text-align:right;top:401.10px;font-size:8.5px;font-weight:normal;color:#505050">3,150.00</div>
<div class="t" style="left:542.00px;width:80px;text-align:right;top:401.10px;font-size:8.5px;font-weight:normal;color:#505050">0.00</div>
<div class="t" style="left:623.25px;width:80px;text-align:right;top:401.10px;font-size:8.5px;font-weight:normal;color:#505050">0.00</div>
<div class="t" style="left:704.50px;width:80px;text-align:right;top:401.10px;font-size:8.5px;font-weight:normal;color:#505050">0.00</div>
<div class="t" style="left:786.40px;width:80px;text-align:right;top:401.10px;font-size:8.5px;font-weight:normal;color:#505050">0.00</div>
<div class="t" style="left:853.00px;width:80px;text-align:right;top:401.10px;font-size:8.5px;font-weight:normal;color:#505050">0.00</div>
<div class="a" style="left:76.75px;top:421.60px;width:857.25px;height:1px;background:#cbcbcb"></div>
<div class="t" style="left:117.10px;top:412.40px;font-size:8.5px;color:#505050">&lt; unknown resource type &gt;</div>
<div class="t" style="left:460.10px;width:80px;text-align:right;top:412.40px;font-size:8.5px;font-weight:normal;color:#505050">3,150.00</div>
<div class="t" style="left:542.00px;width:80px;text-align:right;top:412.40px;font-size:8.5px;font-weight:normal;color:#505050">0.00</div>
<div class="t" style="left:623.25px;width:80px;text-align:right;top:412.40px;font-size:8.5px;font-weight:normal;color:#505050">0.00</div>
<div class="t" style="left:704.50px;width:80px;text-align:right;top:412.40px;font-size:8.5px;font-weight:normal;color:#505050">0.00</div>
<div class="t" style="left:786.40px;width:80px;text-align:right;top:412.40px;font-size:8.5px;font-weight:normal;color:#505050">0.00</div>
<div class="t" style="left:853.00px;width:80px;text-align:right;top:412.40px;font-size:8.5px;font-weight:normal;color:#505050">0.00</div>
<div class="a" style="left:76.75px;top:432.90px;width:857.25px;height:1px;background:#cbcbcb"></div>
<div class="t" style="left:126.65px;top:423.70px;font-size:8.5px;color:#505050">&lt; item not specified &gt;</div>
<div class="t" style="left:460.10px;width:80px;text-align:right;top:423.70px;font-size:8.5px;font-weight:normal;color:#505050">3,150.00</div>
<div class="t" style="left:542.00px;width:80px;text-align:right;top:423.70px;font-size:8.5px;font-weight:normal;color:#505050">0.00</div>
<div class="t" style="left:623.25px;width:80px;text-align:right;top:423.70px;font-size:8.5px;font-weight:normal;color:#505050">0.00</div>
<div class="t" style="left:704.50px;width:80px;text-align:right;top:423.70px;font-size:8.5px;font-weight:normal;color:#505050">0.00</div>
<div class="t" style="left:786.40px;width:80px;text-align:right;top:423.70px;font-size:8.5px;font-weight:normal;color:#505050">0.00</div>
<div class="t" style="left:853.00px;width:80px;text-align:right;top:423.70px;font-size:8.5px;font-weight:normal;color:#505050">0.00</div>
<div class="a" style="left:76.75px;top:444.20px;width:857.25px;height:1px;background:#cbcbcb"></div>
<div class="t" style="left:107.55px;top:435.00px;font-size:8.5px;color:#505050">Overheads</div>
<div class="t" style="left:460.10px;width:80px;text-align:right;top:435.00px;font-size:8.5px;font-weight:normal;color:#505050">3,740.00</div>
<div class="t" style="left:542.00px;width:80px;text-align:right;top:435.00px;font-size:8.5px;font-weight:normal;color:#505050">0.00</div>
<div class="t" style="left:623.25px;width:80px;text-align:right;top:435.00px;font-size:8.5px;font-weight:normal;color:#505050">0.00</div>
<div class="t" style="left:704.50px;width:80px;text-align:right;top:435.00px;font-size:8.5px;font-weight:normal;color:#505050">0.00</div>
<div class="t" style="left:786.40px;width:80px;text-align:right;top:435.00px;font-size:8.5px;font-weight:normal;color:#505050">0.00</div>
<div class="t" style="left:853.00px;width:80px;text-align:right;top:435.00px;font-size:8.5px;font-weight:normal;color:#505050">0.00</div>
<div class="a" style="left:76.75px;top:455.50px;width:857.25px;height:1px;background:#cbcbcb"></div>
<div class="t" style="left:117.10px;top:446.30px;font-size:8.5px;color:#505050">&lt; unknown resource type &gt;</div>
<div class="t" style="left:460.10px;width:80px;text-align:right;top:446.30px;font-size:8.5px;font-weight:normal;color:#505050">3,740.00</div>
<div class="t" style="left:542.00px;width:80px;text-align:right;top:446.30px;font-size:8.5px;font-weight:normal;color:#505050">0.00</div>
<div class="t" style="left:623.25px;width:80px;text-align:right;top:446.30px;font-size:8.5px;font-weight:normal;color:#505050">0.00</div>
<div class="t" style="left:704.50px;width:80px;text-align:right;top:446.30px;font-size:8.5px;font-weight:normal;color:#505050">0.00</div>
<div class="t" style="left:786.40px;width:80px;text-align:right;top:446.30px;font-size:8.5px;font-weight:normal;color:#505050">0.00</div>
<div class="t" style="left:853.00px;width:80px;text-align:right;top:446.30px;font-size:8.5px;font-weight:normal;color:#505050">0.00</div>
<div class="a" style="left:76.75px;top:466.80px;width:857.25px;height:1px;background:#cbcbcb"></div>
<div class="t" style="left:126.65px;top:457.60px;font-size:8.5px;color:#505050">&lt; item not specified &gt;</div>
<div class="t" style="left:460.10px;width:80px;text-align:right;top:457.60px;font-size:8.5px;font-weight:normal;color:#505050">3,740.00</div>
<div class="t" style="left:542.00px;width:80px;text-align:right;top:457.60px;font-size:8.5px;font-weight:normal;color:#505050">0.00</div>
<div class="t" style="left:623.25px;width:80px;text-align:right;top:457.60px;font-size:8.5px;font-weight:normal;color:#505050">0.00</div>
<div class="t" style="left:704.50px;width:80px;text-align:right;top:457.60px;font-size:8.5px;font-weight:normal;color:#505050">0.00</div>
<div class="t" style="left:786.40px;width:80px;text-align:right;top:457.60px;font-size:8.5px;font-weight:normal;color:#505050">0.00</div>
<div class="t" style="left:853.00px;width:80px;text-align:right;top:457.60px;font-size:8.5px;font-weight:normal;color:#505050">0.00</div>
<div class="a" style="left:76.75px;top:478.10px;width:857.25px;height:1px;background:#cbcbcb"></div>
<div class="t" style="left:107.55px;top:468.90px;font-size:8.5px;color:#505050">Sub Contract</div>
<div class="t" style="left:460.10px;width:80px;text-align:right;top:468.90px;font-size:8.5px;font-weight:normal;color:#505050">2,240.00</div>
<div class="t" style="left:542.00px;width:80px;text-align:right;top:468.90px;font-size:8.5px;font-weight:normal;color:#505050">0.00</div>
<div class="t" style="left:623.25px;width:80px;text-align:right;top:468.90px;font-size:8.5px;font-weight:normal;color:#505050">0.00</div>
<div class="t" style="left:704.50px;width:80px;text-align:right;top:468.90px;font-size:8.5px;font-weight:normal;color:#505050">0.00</div>
<div class="t" style="left:786.40px;width:80px;text-align:right;top:468.90px;font-size:8.5px;font-weight:normal;color:#505050">0.00</div>
<div class="t" style="left:853.00px;width:80px;text-align:right;top:468.90px;font-size:8.5px;font-weight:normal;color:#505050">0.00</div>
<div class="a" style="left:76.75px;top:489.40px;width:857.25px;height:1px;background:#cbcbcb"></div>
<div class="t" style="left:117.10px;top:480.20px;font-size:8.5px;color:#505050">&lt; unknown resource type &gt;</div>
<div class="t" style="left:460.10px;width:80px;text-align:right;top:480.20px;font-size:8.5px;font-weight:normal;color:#505050">2,240.00</div>
<div class="t" style="left:542.00px;width:80px;text-align:right;top:480.20px;font-size:8.5px;font-weight:normal;color:#505050">0.00</div>
<div class="t" style="left:623.25px;width:80px;text-align:right;top:480.20px;font-size:8.5px;font-weight:normal;color:#505050">0.00</div>
<div class="t" style="left:704.50px;width:80px;text-align:right;top:480.20px;font-size:8.5px;font-weight:normal;color:#505050">0.00</div>
<div class="t" style="left:786.40px;width:80px;text-align:right;top:480.20px;font-size:8.5px;font-weight:normal;color:#505050">0.00</div>
<div class="t" style="left:853.00px;width:80px;text-align:right;top:480.20px;font-size:8.5px;font-weight:normal;color:#505050">0.00</div>
<div class="a" style="left:76.75px;top:500.70px;width:857.25px;height:1px;background:#cbcbcb"></div>
<div class="t" style="left:126.65px;top:491.50px;font-size:8.5px;color:#505050">&lt; item not specified &gt;</div>
<div class="t" style="left:460.10px;width:80px;text-align:right;top:491.50px;font-size:8.5px;font-weight:normal;color:#505050">2,240.00</div>
<div class="t" style="left:542.00px;width:80px;text-align:right;top:491.50px;font-size:8.5px;font-weight:normal;color:#505050">0.00</div>
<div class="t" style="left:623.25px;width:80px;text-align:right;top:491.50px;font-size:8.5px;font-weight:normal;color:#505050">0.00</div>
<div class="t" style="left:704.50px;width:80px;text-align:right;top:491.50px;font-size:8.5px;font-weight:normal;color:#505050">0.00</div>
<div class="t" style="left:786.40px;width:80px;text-align:right;top:491.50px;font-size:8.5px;font-weight:normal;color:#505050">0.00</div>
<div class="t" style="left:853.00px;width:80px;text-align:right;top:491.50px;font-size:8.5px;font-weight:normal;color:#505050">0.00</div>
<div class="a" style="left:76.75px;top:512.00px;width:857.25px;height:1px;background:#cbcbcb"></div>
<div class="t" style="left:107.55px;top:502.80px;font-size:8.5px;color:#505050">Transportation</div>
<div class="t" style="left:460.10px;width:80px;text-align:right;top:502.80px;font-size:8.5px;font-weight:normal;color:#505050">3,930.00</div>
<div class="t" style="left:542.00px;width:80px;text-align:right;top:502.80px;font-size:8.5px;font-weight:normal;color:#505050">0.00</div>
<div class="t" style="left:623.25px;width:80px;text-align:right;top:502.80px;font-size:8.5px;font-weight:normal;color:#505050">0.00</div>
<div class="t" style="left:704.50px;width:80px;text-align:right;top:502.80px;font-size:8.5px;font-weight:normal;color:#505050">0.00</div>
<div class="t" style="left:786.40px;width:80px;text-align:right;top:502.80px;font-size:8.5px;font-weight:normal;color:#505050">0.00</div>
<div class="t" style="left:853.00px;width:80px;text-align:right;top:502.80px;font-size:8.5px;font-weight:normal;color:#505050">0.00</div>
<div class="a" style="left:76.75px;top:523.30px;width:857.25px;height:1px;background:#cbcbcb"></div>
<div class="t" style="left:117.10px;top:514.10px;font-size:8.5px;color:#505050">&lt; unknown resource type &gt;</div>
<div class="t" style="left:460.10px;width:80px;text-align:right;top:514.10px;font-size:8.5px;font-weight:normal;color:#505050">3,930.00</div>
<div class="t" style="left:542.00px;width:80px;text-align:right;top:514.10px;font-size:8.5px;font-weight:normal;color:#505050">0.00</div>
<div class="t" style="left:623.25px;width:80px;text-align:right;top:514.10px;font-size:8.5px;font-weight:normal;color:#505050">0.00</div>
<div class="t" style="left:704.50px;width:80px;text-align:right;top:514.10px;font-size:8.5px;font-weight:normal;color:#505050">0.00</div>
<div class="t" style="left:786.40px;width:80px;text-align:right;top:514.10px;font-size:8.5px;font-weight:normal;color:#505050">0.00</div>
<div class="t" style="left:853.00px;width:80px;text-align:right;top:514.10px;font-size:8.5px;font-weight:normal;color:#505050">0.00</div>
<div class="a" style="left:76.75px;top:534.60px;width:857.25px;height:1px;background:#cbcbcb"></div>
<div class="t" style="left:126.65px;top:525.40px;font-size:8.5px;color:#505050">&lt; item not specified &gt;</div>
<div class="t" style="left:460.10px;width:80px;text-align:right;top:525.40px;font-size:8.5px;font-weight:normal;color:#505050">3,930.00</div>
<div class="t" style="left:542.00px;width:80px;text-align:right;top:525.40px;font-size:8.5px;font-weight:normal;color:#505050">0.00</div>
<div class="t" style="left:623.25px;width:80px;text-align:right;top:525.40px;font-size:8.5px;font-weight:normal;color:#505050">0.00</div>
<div class="t" style="left:704.50px;width:80px;text-align:right;top:525.40px;font-size:8.5px;font-weight:normal;color:#505050">0.00</div>
<div class="t" style="left:786.40px;width:80px;text-align:right;top:525.40px;font-size:8.5px;font-weight:normal;color:#505050">0.00</div>
<div class="t" style="left:853.00px;width:80px;text-align:right;top:525.40px;font-size:8.5px;font-weight:normal;color:#505050">0.00</div>
<div class="a" style="left:76.75px;top:545.90px;width:857.25px;height:1px;background:#cbcbcb"></div>
<div class="t" style="left:84.00px;top:536.70px;font-size:8.5px;color:#505050">2.2</div>
<div class="a" style="left:112.50px;top:535.10px;width:1px;height:11.30px;background:#d8d8d8"></div>
<div class="t" style="left:134.20px;top:536.70px;font-size:8.5px;color:#505050">Filling &amp; Back filling</div>
<div class="t" style="left:460.10px;width:80px;text-align:right;top:536.70px;font-size:8.5px;font-weight:normal;color:#505050">17,330.00</div>
<div class="t" style="left:542.00px;width:80px;text-align:right;top:536.70px;font-size:8.5px;font-weight:normal;color:#505050">0.00</div>
<div class="t" style="left:623.25px;width:80px;text-align:right;top:536.70px;font-size:8.5px;font-weight:normal;color:#505050">0.00</div>
<div class="t" style="left:704.50px;width:80px;text-align:right;top:536.70px;font-size:8.5px;font-weight:normal;color:#505050">0.00</div>
<div class="t" style="left:786.40px;width:80px;text-align:right;top:536.70px;font-size:8.5px;font-weight:normal;color:#505050">0.00</div>
<div class="t" style="left:853.00px;width:80px;text-align:right;top:536.70px;font-size:8.5px;font-weight:normal;color:#505050">0.00</div>
<div class="a" style="left:76.75px;top:557.20px;width:857.25px;height:1px;background:#cbcbcb"></div>
<div class="t" style="left:107.55px;top:548.00px;font-size:8.5px;color:#505050">Equipment</div>
<div class="t" style="left:460.10px;width:80px;text-align:right;top:548.00px;font-size:8.5px;font-weight:normal;color:#505050">1,760.00</div>
<div class="t" style="left:542.00px;width:80px;text-align:right;top:548.00px;font-size:8.5px;font-weight:normal;color:#505050">0.00</div>
<div class="t" style="left:623.25px;width:80px;text-align:right;top:548.00px;font-size:8.5px;font-weight:normal;color:#505050">0.00</div>
<div class="t" style="left:704.50px;width:80px;text-align:right;top:548.00px;font-size:8.5px;font-weight:normal;color:#505050">0.00</div>
<div class="t" style="left:786.40px;width:80px;text-align:right;top:548.00px;font-size:8.5px;font-weight:normal;color:#505050">0.00</div>
<div class="t" style="left:853.00px;width:80px;text-align:right;top:548.00px;font-size:8.5px;font-weight:normal;color:#505050">0.00</div>
<div class="a" style="left:76.75px;top:568.50px;width:857.25px;height:1px;background:#cbcbcb"></div>
<div class="t" style="left:117.10px;top:559.30px;font-size:8.5px;color:#505050">&lt; unknown resource type &gt;</div>
<div class="t" style="left:460.10px;width:80px;text-align:right;top:559.30px;font-size:8.5px;font-weight:normal;color:#505050">1,760.00</div>
<div class="t" style="left:542.00px;width:80px;text-align:right;top:559.30px;font-size:8.5px;font-weight:normal;color:#505050">0.00</div>
<div class="t" style="left:623.25px;width:80px;text-align:right;top:559.30px;font-size:8.5px;font-weight:normal;color:#505050">0.00</div>
<div class="t" style="left:704.50px;width:80px;text-align:right;top:559.30px;font-size:8.5px;font-weight:normal;color:#505050">0.00</div>
<div class="t" style="left:786.40px;width:80px;text-align:right;top:559.30px;font-size:8.5px;font-weight:normal;color:#505050">0.00</div>
<div class="t" style="left:853.00px;width:80px;text-align:right;top:559.30px;font-size:8.5px;font-weight:normal;color:#505050">0.00</div>
<div class="a" style="left:76.75px;top:579.80px;width:857.25px;height:1px;background:#cbcbcb"></div>
<div class="t" style="left:126.65px;top:570.60px;font-size:8.5px;color:#505050">&lt; item not specified &gt;</div>
<div class="t" style="left:460.10px;width:80px;text-align:right;top:570.60px;font-size:8.5px;font-weight:normal;color:#505050">1,760.00</div>
<div class="t" style="left:542.00px;width:80px;text-align:right;top:570.60px;font-size:8.5px;font-weight:normal;color:#505050">0.00</div>
<div class="t" style="left:623.25px;width:80px;text-align:right;top:570.60px;font-size:8.5px;font-weight:normal;color:#505050">0.00</div>
<div class="t" style="left:704.50px;width:80px;text-align:right;top:570.60px;font-size:8.5px;font-weight:normal;color:#505050">0.00</div>
<div class="t" style="left:786.40px;width:80px;text-align:right;top:570.60px;font-size:8.5px;font-weight:normal;color:#505050">0.00</div>
<div class="t" style="left:853.00px;width:80px;text-align:right;top:570.60px;font-size:8.5px;font-weight:normal;color:#505050">0.00</div>
<div class="a" style="left:76.75px;top:591.10px;width:857.25px;height:1px;background:#cbcbcb"></div>
<div class="t" style="left:107.55px;top:581.90px;font-size:8.5px;color:#505050">Labor Costs</div>
<div class="t" style="left:460.10px;width:80px;text-align:right;top:581.90px;font-size:8.5px;font-weight:normal;color:#505050">2,000.00</div>
<div class="t" style="left:542.00px;width:80px;text-align:right;top:581.90px;font-size:8.5px;font-weight:normal;color:#505050">0.00</div>
<div class="t" style="left:623.25px;width:80px;text-align:right;top:581.90px;font-size:8.5px;font-weight:normal;color:#505050">0.00</div>
<div class="t" style="left:704.50px;width:80px;text-align:right;top:581.90px;font-size:8.5px;font-weight:normal;color:#505050">0.00</div>
<div class="t" style="left:786.40px;width:80px;text-align:right;top:581.90px;font-size:8.5px;font-weight:normal;color:#505050">0.00</div>
<div class="t" style="left:853.00px;width:80px;text-align:right;top:581.90px;font-size:8.5px;font-weight:normal;color:#505050">0.00</div>
<div class="a" style="left:461.40px;top:116.80px;width:1px;height:470.20px;background:#d2d2d2"></div>
<div class="a" style="left:542.60px;top:116.80px;width:1px;height:470.20px;background:#d2d2d2"></div>
<div class="a" style="left:624.50px;top:116.80px;width:1px;height:470.20px;background:#d2d2d2"></div>
<div class="a" style="left:705.75px;top:116.80px;width:1px;height:470.20px;background:#d2d2d2"></div>
<div class="a" style="left:787.00px;top:116.80px;width:1px;height:470.20px;background:#d2d2d2"></div>
<div class="a" style="left:868.90px;top:116.80px;width:1px;height:470.20px;background:#d2d2d2"></div>
<div class="a" style="left:76.75px;top:116.80px;width:1px;height:470.20px;background:#d4d4d4"></div>
<div class="a" style="left:1.00px;top:120.00px;width:10px;height:8px;border:1px solid #c9c9c9;border-radius:3.5px;background:#f4f4f4"></div>
<div class="a" style="left:3.00px;top:123.00px;width:6px;height:1px;background:#8a8a8a"></div>
<div class="a" style="left:6.00px;top:128.00px;width:1px;height:463.60px;background:#cdcdcd"></div>
<div class="a" style="left:6.00px;top:590.60px;width:5px;height:1.2px;background:#c8c8c8"></div>
<div class="a" style="left:14.00px;top:131.00px;width:10px;height:8px;border:1px solid #c9c9c9;border-radius:3.5px;background:#f4f4f4"></div>
<div class="a" style="left:16.00px;top:134.00px;width:6px;height:1px;background:#8a8a8a"></div>
<div class="a" style="left:18.62px;top:139.30px;width:1px;height:169.80px;background:#cdcdcd"></div>
<div class="a" style="left:18.62px;top:308.10px;width:5px;height:1.2px;background:#c8c8c8"></div>
<div class="a" style="left:27.00px;top:143.00px;width:10px;height:8px;border:1px solid #c9c9c9;border-radius:3.5px;background:#f4f4f4"></div>
<div class="a" style="left:29.00px;top:146.00px;width:6px;height:1px;background:#8a8a8a"></div>
<div class="a" style="left:31.24px;top:150.60px;width:1px;height:22.90px;background:#cdcdcd"></div>
<div class="a" style="left:31.24px;top:172.50px;width:5px;height:1.2px;background:#c8c8c8"></div>
<div class="a" style="left:39.00px;top:154.00px;width:10px;height:8px;border:1px solid #c9c9c9;border-radius:3.5px;background:#f4f4f4"></div>
<div class="a" style="left:41.00px;top:157.00px;width:6px;height:1px;background:#8a8a8a"></div>
<div class="a" style="left:43.86px;top:161.90px;width:1px;height:11.60px;background:#cdcdcd"></div>
<div class="a" style="left:43.86px;top:172.50px;width:5px;height:1.2px;background:#c8c8c8"></div>
<div class="a" style="left:27.00px;top:177.00px;width:10px;height:8px;border:1px solid #c9c9c9;border-radius:3.5px;background:#f4f4f4"></div>
<div class="a" style="left:29.00px;top:180.00px;width:6px;height:1px;background:#8a8a8a"></div>
<div class="a" style="left:31.24px;top:184.50px;width:1px;height:22.90px;background:#cdcdcd"></div>
<div class="a" style="left:31.24px;top:206.40px;width:5px;height:1.2px;background:#c8c8c8"></div>
<div class="a" style="left:39.00px;top:188.00px;width:10px;height:8px;border:1px solid #c9c9c9;border-radius:3.5px;background:#f4f4f4"></div>
<div class="a" style="left:41.00px;top:191.00px;width:6px;height:1px;background:#8a8a8a"></div>
<div class="a" style="left:43.86px;top:195.80px;width:1px;height:11.60px;background:#cdcdcd"></div>
<div class="a" style="left:43.86px;top:206.40px;width:5px;height:1.2px;background:#c8c8c8"></div>
<div class="a" style="left:27.00px;top:211.00px;width:10px;height:8px;border:1px solid #c9c9c9;border-radius:3.5px;background:#f4f4f4"></div>
<div class="a" style="left:29.00px;top:214.00px;width:6px;height:1px;background:#8a8a8a"></div>
<div class="a" style="left:31.24px;top:218.40px;width:1px;height:22.90px;background:#cdcdcd"></div>
<div class="a" style="left:31.24px;top:240.30px;width:5px;height:1.2px;background:#c8c8c8"></div>
<div class="a" style="left:39.00px;top:222.00px;width:10px;height:8px;border:1px solid #c9c9c9;border-radius:3.5px;background:#f4f4f4"></div>
<div class="a" style="left:41.00px;top:225.00px;width:6px;height:1px;background:#8a8a8a"></div>
<div class="a" style="left:43.86px;top:229.70px;width:1px;height:11.60px;background:#cdcdcd"></div>
<div class="a" style="left:43.86px;top:240.30px;width:5px;height:1.2px;background:#c8c8c8"></div>
<div class="a" style="left:27.00px;top:245.00px;width:10px;height:8px;border:1px solid #c9c9c9;border-radius:3.5px;background:#f4f4f4"></div>
<div class="a" style="left:29.00px;top:248.00px;width:6px;height:1px;background:#8a8a8a"></div>
<div class="a" style="left:31.24px;top:252.30px;width:1px;height:22.90px;background:#cdcdcd"></div>
<div class="a" style="left:31.24px;top:274.20px;width:5px;height:1.2px;background:#c8c8c8"></div>
<div class="a" style="left:39.00px;top:256.00px;width:10px;height:8px;border:1px solid #c9c9c9;border-radius:3.5px;background:#f4f4f4"></div>
<div class="a" style="left:41.00px;top:259.00px;width:6px;height:1px;background:#8a8a8a"></div>
<div class="a" style="left:43.86px;top:263.60px;width:1px;height:11.60px;background:#cdcdcd"></div>
<div class="a" style="left:43.86px;top:274.20px;width:5px;height:1.2px;background:#c8c8c8"></div>
<div class="a" style="left:27.00px;top:278.00px;width:10px;height:8px;border:1px solid #c9c9c9;border-radius:3.5px;background:#f4f4f4"></div>
<div class="a" style="left:29.00px;top:281.00px;width:6px;height:1px;background:#8a8a8a"></div>
<div class="a" style="left:31.24px;top:286.20px;width:1px;height:22.90px;background:#cdcdcd"></div>
<div class="a" style="left:31.24px;top:308.10px;width:5px;height:1.2px;background:#c8c8c8"></div>
<div class="a" style="left:39.00px;top:290.00px;width:10px;height:8px;border:1px solid #c9c9c9;border-radius:3.5px;background:#f4f4f4"></div>
<div class="a" style="left:41.00px;top:293.00px;width:6px;height:1px;background:#8a8a8a"></div>
<div class="a" style="left:43.86px;top:297.50px;width:1px;height:11.60px;background:#cdcdcd"></div>
<div class="a" style="left:43.86px;top:308.10px;width:5px;height:1.2px;background:#c8c8c8"></div>
<div class="a" style="left:14.00px;top:312.00px;width:10px;height:8px;border:1px solid #c9c9c9;border-radius:3.5px;background:#f4f4f4"></div>
<div class="a" style="left:16.00px;top:315.00px;width:6px;height:1px;background:#8a8a8a"></div>
<div class="a" style="left:18.62px;top:320.10px;width:1px;height:271.50px;background:#cdcdcd"></div>
<div class="a" style="left:18.62px;top:590.60px;width:5px;height:1.2px;background:#c8c8c8"></div>
<div class="a" style="left:27.00px;top:324.00px;width:10px;height:8px;border:1px solid #c9c9c9;border-radius:3.5px;background:#f4f4f4"></div>
<div class="a" style="left:29.00px;top:327.00px;width:6px;height:1px;background:#8a8a8a"></div>
<div class="a" style="left:31.24px;top:331.40px;width:1px;height:203.70px;background:#cdcdcd"></div>
<div class="a" style="left:31.24px;top:534.10px;width:5px;height:1.2px;background:#c8c8c8"></div>
<div class="a" style="left:39.00px;top:335.00px;width:10px;height:8px;border:1px solid #c9c9c9;border-radius:3.5px;background:#f4f4f4"></div>
<div class="a" style="left:41.00px;top:338.00px;width:6px;height:1px;background:#8a8a8a"></div>
<div class="a" style="left:43.86px;top:342.70px;width:1px;height:22.90px;background:#cdcdcd"></div>
<div class="a" style="left:43.86px;top:364.60px;width:5px;height:1.2px;background:#c8c8c8"></div>
<div class="a" style="left:52.00px;top:346.00px;width:10px;height:8px;border:1px solid #c9c9c9;border-radius:3.5px;background:#f4f4f4"></div>
<div class="a" style="left:54.00px;top:349.00px;width:6px;height:1px;background:#8a8a8a"></div>
<div class="a" style="left:56.48px;top:354.00px;width:1px;height:11.60px;background:#cdcdcd"></div>
<div class="a" style="left:56.48px;top:364.60px;width:5px;height:1.2px;background:#c8c8c8"></div>
<div class="a" style="left:39.00px;top:369.00px;width:10px;height:8px;border:1px solid #c9c9c9;border-radius:3.5px;background:#f4f4f4"></div>
<div class="a" style="left:41.00px;top:372.00px;width:6px;height:1px;background:#8a8a8a"></div>
<div class="a" style="left:43.86px;top:376.60px;width:1px;height:22.90px;background:#cdcdcd"></div>
<div class="a" style="left:43.86px;top:398.50px;width:5px;height:1.2px;background:#c8c8c8"></div>
<div class="a" style="left:52.00px;top:380.00px;width:10px;height:8px;border:1px solid #c9c9c9;border-radius:3.5px;background:#f4f4f4"></div>
<div class="a" style="left:54.00px;top:383.00px;width:6px;height:1px;background:#8a8a8a"></div>
<div class="a" style="left:56.48px;top:387.90px;width:1px;height:11.60px;background:#cdcdcd"></div>
<div class="a" style="left:56.48px;top:398.50px;width:5px;height:1.2px;background:#c8c8c8"></div>
<div class="a" style="left:39.00px;top:403.00px;width:10px;height:8px;border:1px solid #c9c9c9;border-radius:3.5px;background:#f4f4f4"></div>
<div class="a" style="left:41.00px;top:406.00px;width:6px;height:1px;background:#8a8a8a"></div>
<div class="a" style="left:43.86px;top:410.50px;width:1px;height:22.90px;background:#cdcdcd"></div>
<div class="a" style="left:43.86px;top:432.40px;width:5px;height:1.2px;background:#c8c8c8"></div>
<div class="a" style="left:52.00px;top:414.00px;width:10px;height:8px;border:1px solid #c9c9c9;border-radius:3.5px;background:#f4f4f4"></div>
<div class="a" style="left:54.00px;top:417.00px;width:6px;height:1px;background:#8a8a8a"></div>
<div class="a" style="left:56.48px;top:421.80px;width:1px;height:11.60px;background:#cdcdcd"></div>
<div class="a" style="left:56.48px;top:432.40px;width:5px;height:1.2px;background:#c8c8c8"></div>
<div class="a" style="left:39.00px;top:437.00px;width:10px;height:8px;border:1px solid #c9c9c9;border-radius:3.5px;background:#f4f4f4"></div>
<div class="a" style="left:41.00px;top:440.00px;width:6px;height:1px;background:#8a8a8a"></div>
<div class="a" style="left:43.86px;top:444.40px;width:1px;height:22.90px;background:#cdcdcd"></div>
<div class="a" style="left:43.86px;top:466.30px;width:5px;height:1.2px;background:#c8c8c8"></div>
<div class="a" style="left:52.00px;top:448.00px;width:10px;height:8px;border:1px solid #c9c9c9;border-radius:3.5px;background:#f4f4f4"></div>
<div class="a" style="left:54.00px;top:451.00px;width:6px;height:1px;background:#8a8a8a"></div>
<div class="a" style="left:56.48px;top:455.70px;width:1px;height:11.60px;background:#cdcdcd"></div>
<div class="a" style="left:56.48px;top:466.30px;width:5px;height:1.2px;background:#c8c8c8"></div>
<div class="a" style="left:39.00px;top:471.00px;width:10px;height:8px;border:1px solid #c9c9c9;border-radius:3.5px;background:#f4f4f4"></div>
<div class="a" style="left:41.00px;top:474.00px;width:6px;height:1px;background:#8a8a8a"></div>
<div class="a" style="left:43.86px;top:478.30px;width:1px;height:22.90px;background:#cdcdcd"></div>
<div class="a" style="left:43.86px;top:500.20px;width:5px;height:1.2px;background:#c8c8c8"></div>
<div class="a" style="left:52.00px;top:482.00px;width:10px;height:8px;border:1px solid #c9c9c9;border-radius:3.5px;background:#f4f4f4"></div>
<div class="a" style="left:54.00px;top:485.00px;width:6px;height:1px;background:#8a8a8a"></div>
<div class="a" style="left:56.48px;top:489.60px;width:1px;height:11.60px;background:#cdcdcd"></div>
<div class="a" style="left:56.48px;top:500.20px;width:5px;height:1.2px;background:#c8c8c8"></div>
<div class="a" style="left:39.00px;top:504.00px;width:10px;height:8px;border:1px solid #c9c9c9;border-radius:3.5px;background:#f4f4f4"></div>
<div class="a" style="left:41.00px;top:507.00px;width:6px;height:1px;background:#8a8a8a"></div>
<div class="a" style="left:43.86px;top:512.20px;width:1px;height:22.90px;background:#cdcdcd"></div>
<div class="a" style="left:43.86px;top:534.10px;width:5px;height:1.2px;background:#c8c8c8"></div>
<div class="a" style="left:52.00px;top:516.00px;width:10px;height:8px;border:1px solid #c9c9c9;border-radius:3.5px;background:#f4f4f4"></div>
<div class="a" style="left:54.00px;top:519.00px;width:6px;height:1px;background:#8a8a8a"></div>
<div class="a" style="left:56.48px;top:523.50px;width:1px;height:11.60px;background:#cdcdcd"></div>
<div class="a" style="left:56.48px;top:534.10px;width:5px;height:1.2px;background:#c8c8c8"></div>
<div class="a" style="left:27.00px;top:538.00px;width:10px;height:8px;border:1px solid #c9c9c9;border-radius:3.5px;background:#f4f4f4"></div>
<div class="a" style="left:29.00px;top:541.00px;width:6px;height:1px;background:#8a8a8a"></div>
<div class="a" style="left:31.24px;top:546.10px;width:1px;height:45.50px;background:#cdcdcd"></div>
<div class="a" style="left:31.24px;top:590.60px;width:5px;height:1.2px;background:#c8c8c8"></div>
<div class="a" style="left:39.00px;top:550.00px;width:10px;height:8px;border:1px solid #c9c9c9;border-radius:3.5px;background:#f4f4f4"></div>
<div class="a" style="left:41.00px;top:553.00px;width:6px;height:1px;background:#8a8a8a"></div>
<div class="a" style="left:43.86px;top:557.40px;width:1px;height:22.90px;background:#cdcdcd"></div>
<div class="a" style="left:43.86px;top:579.30px;width:5px;height:1.2px;background:#c8c8c8"></div>
<div class="a" style="left:52.00px;top:561.00px;width:10px;height:8px;border:1px solid #c9c9c9;border-radius:3.5px;background:#f4f4f4"></div>
<div class="a" style="left:54.00px;top:564.00px;width:6px;height:1px;background:#8a8a8a"></div>
<div class="a" style="left:56.48px;top:568.70px;width:1px;height:11.60px;background:#cdcdcd"></div>
<div class="a" style="left:56.48px;top:579.30px;width:5px;height:1.2px;background:#c8c8c8"></div>
</div>
<div class="a" style="left:937.00px;top:569.00px;width:3px;height:2px;background:#888"></div>
<div class="a" style="left:925.00px;top:581.00px;width:3px;height:2px;background:#888"></div>
<div class="a" style="left:937.00px;top:7.00px;width:3px;height:2px;background:#ccc"></div>
<div class="a" style="left:935.80px;top:14.00px;width:5px;height:548px;background:#c9c9c9;border-radius:2px"></div>
<div class="a" style="left:935.80px;top:14.00px;width:5px;height:14px;background:#9a9a9a;border-radius:2px"></div>
<div class="a" style="left:14.70px;top:578.80px;width:904.30px;height:5px;background:#cfcfcf;border-radius:2px"></div>
<div class="a" style="left:14.70px;top:578.80px;width:762.30px;height:5px;background:#9c9c9c;border-radius:2px"></div>
</div></div></body></html>
